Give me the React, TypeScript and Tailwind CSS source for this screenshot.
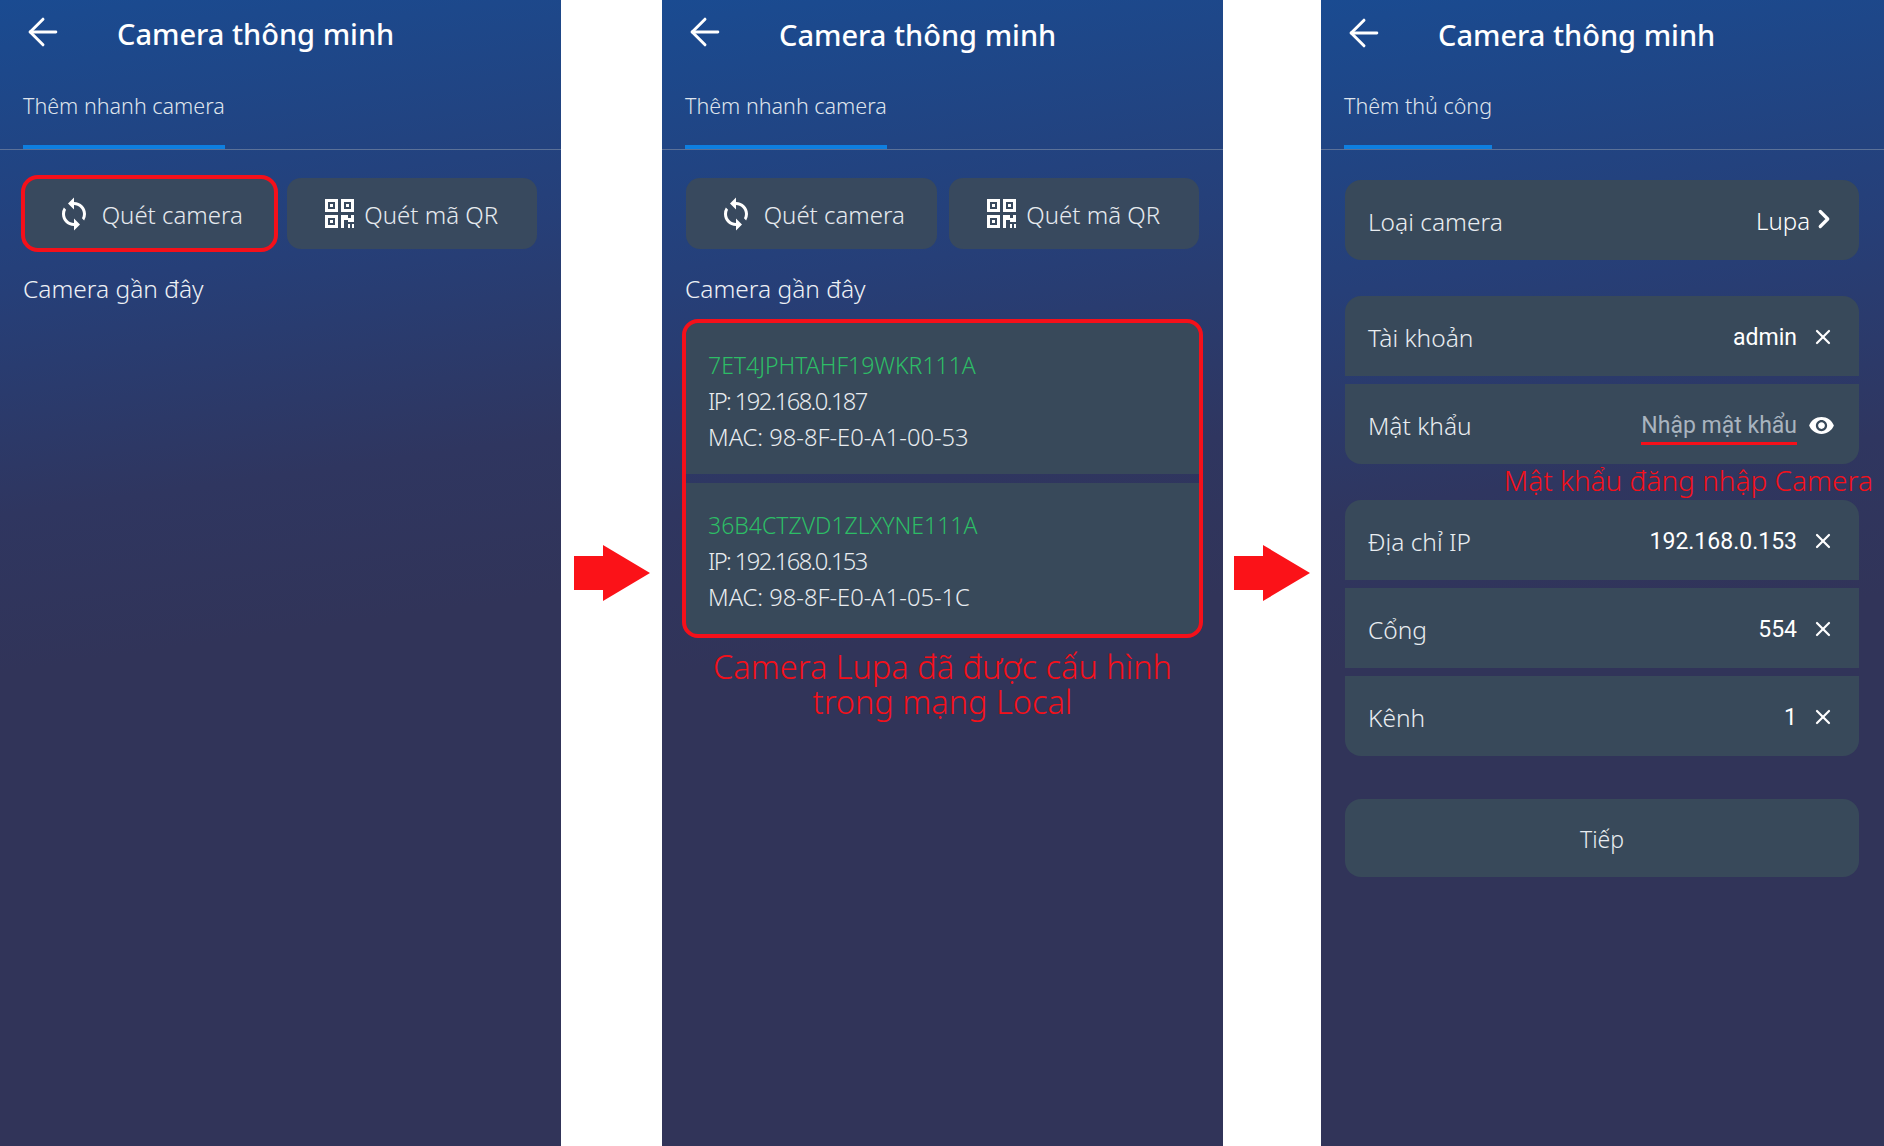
import { ArrowLeft, ChevronRight, X } from "lucide-react";
import { MdSync, MdVisibility } from "react-icons/md";
import type { ReactNode } from "react";

const sans = "font-['Noto_Sans','Open_Sans',sans-serif]";

function Panel({ tab, top, children }: { tab: string; top: string; children: ReactNode }) {
  return (
    <div className={`w-full h-full overflow-hidden bg-[linear-gradient(172deg,#1a4b91_0%,#263f78_24%,#2f3660_42%,#313459_55%,#313459_100%)] ${sans}`}>
      <div className={`flex items-center h-[68px] pl-[21px] ${top}`}>
        <ArrowLeft size={44} strokeWidth={1.6} className="text-white -mt-[5px]" />
        <span className="ml-[52px] text-[29px] font-medium text-white whitespace-nowrap">Camera thông minh</span>
      </div>
      <div className="h-[82px] border-b border-[#5b7198]">
        <div className="inline-flex flex-col justify-between h-full ml-[23px] pt-[22px]">
          <span className="text-[21.5px] font-light text-[#dfe4ec] whitespace-nowrap">{tab}</span>
          <div className="h-[4px] bg-[#0e7fe0]" />
        </div>
      </div>
      {children}
    </div>
  );
}

function QrIcon() {
  return (
    <svg width="29" height="29" viewBox="0 0 29 29" fill="#fff">
      <path fillRule="evenodd" d="M0 0h13v13H0zM3 3v7h7V3zM16 0h13v13H16zM19 3v7h7V3zM0 16h13v13H0zM3 19v7h7v-7z" />
      <path d="M5 5h3v3H5zM21 5h3v3h-3zM5 21h3v3H5zM16 16h7v3h3v-3h3v7h-6v-2h-4v8h-3zM23 25h2v4h-2zM27 25h2v4h-2z" />
    </svg>
  );
}

function ScanButtons({ highlight }: { highlight?: boolean }) {
  return (
    <div className="flex gap-[12px] mx-[24px] mt-[28px] h-[71px]">
      <div className={`w-[251px] flex items-center justify-center gap-[10px] rounded-[14px] bg-[#38495e] ${highlight ? "outline-[4px] -outline-offset-1 outline-[#f5101a]" : ""}`}>
        <MdSync size={36} className="text-white" />
        <span className="pt-[3px] text-[24px] font-light text-[#e6eaef]">Quét camera</span>
      </div>
      <div className="w-[251px] flex items-center justify-center gap-[10px] rounded-[14px] bg-[#38495e]">
        <QrIcon />
        <span className="pt-[3px] text-[24px] font-light text-[#e6eaef]">Quét mã QR</span>
      </div>
    </div>
  );
}

function RecentLabel() {
  return <div className="ml-[23px] mt-[24px] text-[24.5px] font-light text-[#eef1f5] leading-[32px]">Camera gần đây</div>;
}

function CameraCard({ id, ip, mac }: { id: string; ip: string; mac: string }) {
  return (
    <div className="h-[151px] pl-[22px] pt-[24px] bg-[#38495a] text-[23.7px] font-light leading-[36px] text-[#e8ecf0] first:rounded-t-[10px] last:rounded-b-[10px]">
      <div className="text-[23px] text-[#2dbd66]">{id}</div>
      <div className="tracking-[-1.6px]">IP: {ip}</div>
      <div>MAC: {mac}</div>
    </div>
  );
}

function Row({ label, value, muted, rounded, icon }: { label: string; value: ReactNode; muted?: boolean; rounded: string; icon: ReactNode }) {
  return (
    <div className={`flex items-center h-[80px] pl-[23px] pr-[24px] pt-[3px] bg-[#38495a] ${rounded}`}>
      <span className="pt-px text-[24.5px] font-light text-[#e9edf1]">{label}</span>
      <span className={`ml-auto font-['Roboto',sans-serif] text-[23px] pt-px ${muted ? "text-[#a9b4bf]" : "text-white"}`}>{value}</span>
      <span className="w-[38px] flex justify-end text-white">{icon}</span>
    </div>
  );
}

function RedArrow() {
  return (
    <svg width="76" height="56" viewBox="0 0 76 56" fill="#fb1218">
      <polygon points="0,11 29,11 29,0 76,28 29,56 29,45 0,45" />
    </svg>
  );
}

const clearIcon = <X size={24} strokeWidth={2.2} className="-mt-[2px]" />;

export default function App() {
  return (
    <div className="flex w-[1884px] h-[1146px] bg-white">
      <div className="w-[561px] shrink-0">
        <Panel tab="Thêm nhanh camera" top="">
          <ScanButtons highlight />
          <RecentLabel />
        </Panel>
      </div>
      <div className="w-[101px] flex items-center justify-center"><RedArrow /></div>
      <div className="w-[561px] shrink-0">
        <Panel tab="Thêm nhanh camera" top="pt-px">
          <ScanButtons />
          <RecentLabel />
          <div className="mx-[24px] mt-[18px] flex flex-col gap-[9px] rounded-[12px] outline-[4px] outline-[#f5101a]">
            <CameraCard id="7ET4JPHTAHF19WKR111A" ip="192.168.0.187" mac="98-8F-E0-A1-00-53" />
            <CameraCard id="36B4CTZVD1ZLXYNE111A" ip="192.168.0.153" mac="98-8F-E0-A1-05-1C" />
          </div>
          <div className="mt-[15px] text-center text-[32.5px] font-light leading-[35px] text-[#f5101a]">
            Camera Lupa đã được cấu hình<br />trong mạng Local
          </div>
        </Panel>
      </div>
      <div className="w-[98px] flex items-center justify-center"><RedArrow /></div>
      <div className="w-[563px] shrink-0">
        <Panel tab="Thêm thủ công" top="pt-[2px]">
          <div className="ml-[24px] mr-[25px] mt-[30px]">
            <Row
              label="Loại camera"
              value={<span className="-mr-[13px] font-['Noto_Sans',sans-serif] text-[24px] font-light">Lupa</span>}
              rounded="rounded-[16px]"
              icon={<ChevronRight size={30} strokeWidth={2.6} className="-mr-[4px] -mt-[5px]" />}
            />
            <div className="mt-[36px] flex flex-col gap-[8px]">
              <Row label="Tài khoản" value="admin" rounded="rounded-t-[16px]" icon={clearIcon} />
              <Row
                label="Mật khẩu"
                value={<span className="border-b-[3px] border-[#f5101a] pb-[3px]">Nhập mật khẩu</span>}
                muted
                rounded="rounded-b-[16px]"
                icon={<MdVisibility size={27} />}
              />
            </div>
            <div className="flex items-center justify-end h-[37px] -mr-[14px] -mt-[1px] pb-[3px] text-[28px] font-light text-[#f5101a] whitespace-nowrap">Mật khẩu đăng nhập Camera</div>
            <div className="flex flex-col gap-[8px]">
              <Row label="Địa chỉ IP" value="192.168.0.153" rounded="rounded-t-[16px]" icon={clearIcon} />
              <Row label="Cổng" value="554" rounded="" icon={clearIcon} />
              <Row label="Kênh" value="1" rounded="rounded-b-[16px]" icon={clearIcon} />
            </div>
            <div className="mt-[43px] h-[78px] pt-[3px] flex items-center justify-center rounded-[16px] bg-[#38495a] text-[23px] font-light text-[#e9edf1]">Tiếp</div>
          </div>
        </Panel>
      </div>
    </div>
  );
}
